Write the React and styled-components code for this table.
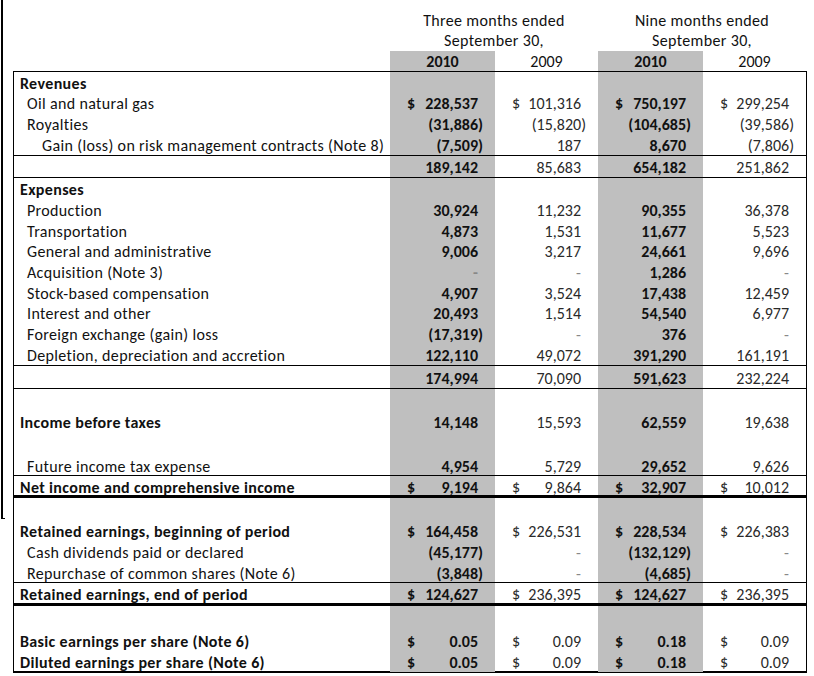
import styled, { createGlobalStyle } from "styled-components";

const GlobalStyle = createGlobalStyle`
  html, body {
    margin: 0;
    padding: 0;
    background: #ffffff;
  }
`;

const COLS = "376px 105px 103px 105px 103px";
const GREY = "#bfbfbf";

const Page = styled.div`
  display: flex;
  align-items: flex-start;
  padding-left: 1px;
  font-family: "Carlito", "Lato", "Liberation Sans", sans-serif;
  font-size: 16px;
  letter-spacing: 0.35px;
  color: #111;
`;

const EdgeRule = styled.div`
  box-sizing: border-box;
  width: 4px;
  height: 519px;
  border-left: 2px solid #000;
  border-bottom: 1px solid #000;
`;

const Sheet = styled.div`
  display: flex;
  flex-direction: column;
  width: 794px;
  margin-left: 8px;
  padding-top: 10px;
`;

const HeadRow = styled.div`
  display: grid;
  grid-template-columns: ${COLS};
  height: ${(p) => p.$h}px;
  padding-left: 1px;
`;

const GroupTitle = styled.div`
  grid-column: span 2;
  display: flex;
  align-items: center;
  justify-content: center;
  white-space: nowrap;
`;

const YearCell = styled.div`
  display: flex;
  align-items: center;
  justify-content: center;
  letter-spacing: 0;
  background: ${(p) => (p.$shade ? GREY : "transparent")};
  font-weight: ${(p) => (p.$shade ? 700 : 400)};
`;

const Table = styled.div`
  display: flex;
  flex-direction: column;
  border-left: 1px solid #000;
  border-right: 1px solid #000;
  border-bottom: 2px solid #000;
`;

const Row = styled.div`
  box-sizing: border-box;
  display: grid;
  grid-template-columns: ${COLS};
  height: ${(p) => p.$h}px;
  border-top: ${(p) => p.$rule || 0}px solid #000;
`;

const Label = styled.div`
  display: flex;
  align-items: center;
  padding-top: 2px;
  padding-left: ${(p) => 6 + (p.$indent || 0)}px;
  font-weight: ${(p) => (p.$bold ? 700 : 400)};
  white-space: nowrap;
`;

const Amount = styled.div`
  display: flex;
  align-items: center;
  justify-content: space-between;
  padding: 2px 12px 0 17px;
  letter-spacing: 0;
  background: ${(p) => (p.$shade ? GREY : "transparent")};
  font-weight: ${(p) => (p.$shade ? 700 : 400)};
  color: ${(p) => (p.$shade ? "#111" : "#2a2a2a")};
  white-space: nowrap;
`;

const Dollar = styled.span`
  margin-right: 4px;
`;

const Figure = styled.span`
  margin-left: auto;
  padding-right: ${(p) => (p.$hang ? 5 : 0)}px;
  color: ${(p) => (p.$dash ? "#888" : "inherit")};
`;

const rows = [
  { label: "Revenues", bold: true, h: 21, rule: 1 },
  { label: "Oil and natural gas", indent: 7, h: 21, cur: true, v: ["228,537", "101,316", "750,197", "299,254"] },
  { label: "Royalties", indent: 7, h: 21, v: ["(31,886)", "(15,820)", "(104,685)", "(39,586)"] },
  { label: "Gain (loss) on risk management contracts (Note 8)", indent: 22, h: 21, v: ["(7,509)", "187", "8,670", "(7,806)"] },
  { h: 22, rule: 1, v: ["189,142", "85,683", "654,182", "251,862"] },
  { label: "Expenses", bold: true, h: 22, rule: 1 },
  { label: "Production", indent: 7, h: 21, v: ["30,924", "11,232", "90,355", "36,378"] },
  { label: "Transportation", indent: 7, h: 20, v: ["4,873", "1,531", "11,677", "5,523"] },
  { label: "General and administrative", indent: 7, h: 21, v: ["9,006", "3,217", "24,661", "9,696"] },
  { label: "Acquisition (Note 3)", indent: 7, h: 21, v: ["-", "-", "1,286", "-"] },
  { label: "Stock-based compensation", indent: 7, h: 20, v: ["4,907", "3,524", "17,438", "12,459"] },
  { label: "Interest and other", indent: 7, h: 21, v: ["20,493", "1,514", "54,540", "6,977"] },
  { label: "Foreign exchange (gain) loss", indent: 7, h: 21, v: ["(17,319)", "-", "376", "-"] },
  { label: "Depletion, depreciation and accretion", indent: 7, h: 21, v: ["122,110", "49,072", "391,290", "161,191"] },
  { h: 23, rule: 1, v: ["174,994", "70,090", "591,623", "232,224"] },
  { h: 21, rule: 1 },
  { label: "Income before taxes", bold: true, h: 25, v: ["14,148", "15,593", "62,559", "19,638"] },
  { h: 21 },
  { label: "Future income tax expense", indent: 7, h: 20, v: ["4,954", "5,729", "29,652", "9,626"] },
  { label: "Net income and comprehensive income", bold: true, h: 20, rule: 1, cur: true, v: ["9,194", "9,864", "32,907", "10,012"] },
  { h: 24, rule: 3 },
  { label: "Retained earnings, beginning of period", bold: true, h: 22, cur: true, v: ["164,458", "226,531", "228,534", "226,383"] },
  { label: "Cash dividends paid or declared", indent: 7, h: 21, v: ["(45,177)", "-", "(132,129)", "-"] },
  { label: "Repurchase of common shares (Note 6)", indent: 7, h: 20, v: ["(3,848)", "-", "(4,685)", "-"] },
  { label: "Retained earnings, end of period", bold: true, h: 21, rule: 1, cur: true, v: ["124,627", "236,395", "124,627", "236,395"] },
  { h: 27, rule: 3 },
  { label: "Basic earnings per share (Note 6)", bold: true, h: 21, cur: true, v: ["0.05", "0.09", "0.18", "0.09"] },
  { label: "Diluted earnings per share (Note 6)", bold: true, h: 20, cur: true, v: ["0.05", "0.09", "0.18", "0.09"] },
];

function Cell({ shade, value, cur }) {
  const neg = value && value.endsWith(")");
  const dash = value === "-";
  return (
    <Amount $shade={shade}>
      {cur && <Dollar>$</Dollar>}
      {value && (
        <Figure $hang={!neg} $dash={dash}>
          {value}
        </Figure>
      )}
    </Amount>
  );
}

export default function App() {
  return (
    <>
      <GlobalStyle />
      <Page>
        <EdgeRule />
        <Sheet>
          <HeadRow $h={20}>
            <div />
            <GroupTitle>Three months ended</GroupTitle>
            <GroupTitle>Nine months ended</GroupTitle>
          </HeadRow>
          <HeadRow $h={21}>
            <div />
            <GroupTitle>September 30,</GroupTitle>
            <GroupTitle>September 30,</GroupTitle>
          </HeadRow>
          <HeadRow $h={20}>
            <div />
            <YearCell $shade>2010</YearCell>
            <YearCell>2009</YearCell>
            <YearCell $shade>2010</YearCell>
            <YearCell>2009</YearCell>
          </HeadRow>
          <Table>
            {rows.map((r, i) => (
              <Row key={i} $h={r.h} $rule={r.rule}>
                <Label $bold={r.bold} $indent={r.indent}>
                  {r.label}
                </Label>
                {[0, 1, 2, 3].map((c) => (
                  <Cell
                    key={c}
                    shade={c % 2 === 0}
                    cur={r.cur}
                    value={r.v ? r.v[c] : null}
                  />
                ))}
              </Row>
            ))}
          </Table>
        </Sheet>
      </Page>
    </>
  );
}
